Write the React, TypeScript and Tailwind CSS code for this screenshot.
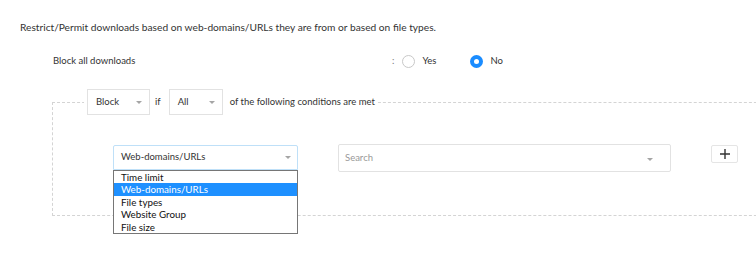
import React from "react";

const Caret = ({ className = "" }: { className?: string }) => (
  <svg width="6" height="3" viewBox="0 0 6 3" className={className}>
    <path d="M0 0h6L3 3z" fill="#a5a5a5" />
  </svg>
);

const options = ["Time limit", "Web-domains/URLs", "File types", "Website Group", "File size"];

export default function App() {
  return (
    <div
      className="relative w-[756px] h-[255px] overflow-hidden bg-white text-[#333] text-[9.5px]"
      style={{ fontFamily: "Lato, 'Liberation Sans', sans-serif" }}
    >
      {/* 설명 */}
      <p className="pt-[20px] pl-[20px] leading-[14px] text-[10.2px]">
        Restrict/Permit downloads based on web-domains/URLs they are from or based on file types.
      </p>

      {/* 전체 차단 */}
      <div className="flex items-center mt-[19px] pl-[53px] h-[16px]">
        <span className="w-[339px]">Block all downloads</span>
        <span className="text-[#777] mr-[8px]">:</span>
        <span className="w-[13px] h-[13px] rounded-full border border-[#c8c8c8] bg-white" />
        <span className="ml-[7px] w-[48px]">Yes</span>
        <span className="w-[13px] h-[13px] rounded-full bg-[#1a8cff] flex items-center justify-center">
          <span className="w-[5px] h-[5px] rounded-full bg-white" />
        </span>
        <span className="ml-[7px]">No</span>
      </div>

      {/* 조건 영역 */}
      <fieldset className="ml-[52px] mt-[20px] w-[740px] border border-dashed border-[#d4d4d4]">
        <legend className="ml-[31px] px-[3px]">
          <div className="flex items-center">
            <div className="w-[63px] h-[26px] border border-[#e2e2e2] flex items-center justify-between pl-[8px] pr-[7px]">
              <span>Block</span>
              <Caret />
            </div>
            <span className="ml-[5px] mr-[8px]">if</span>
            <div className="w-[54px] h-[26px] border border-[#e2e2e2] flex items-center justify-between pl-[8px] pr-[7px]">
              <span>All</span>
              <Caret />
            </div>
            <span className="ml-[7px]">of the following conditions are met</span>
          </div>
        </legend>

        <div className="flex items-start pl-[60px] pt-[30px] pb-[43px]">
          <div className="relative">
            <div className="w-[185px] h-[25px] border border-[#bfe0f8] rounded-t-[2px] flex items-center justify-between pl-[7px] pr-[6px]">
              <span>Web-domains/URLs</span>
              <Caret />
            </div>
            {/* 드롭다운 목록 */}
            <div className="absolute left-0 top-[25px] w-[185px] border border-[#767676] bg-white text-[#111] text-[9.8px] leading-[12.4px] z-10">
              {options.map((o) => (
                <div
                  key={o}
                  className={
                    o === "Web-domains/URLs"
                      ? "bg-[#1e90ff] text-white pl-[7px]"
                      : "pl-[7px]"
                  }
                >
                  {o}
                </div>
              ))}
            </div>
          </div>

          <div className="ml-[40px] -mt-[1px] w-[333px] h-[28px] border border-[#e2e2e2] rounded-[2px] flex items-center justify-between pl-[6px] pr-[17px]">
            <span className="text-[#999]">Search</span>
            <Caret className="mt-[3px]" />
          </div>

          <button className="ml-[40px] w-[27px] h-[18px] border border-[#e5e5e5] rounded-[2px] flex items-center justify-center">
            <svg width="10" height="10" viewBox="0 0 10 10">
              <path d="M5 0v10M0 5h10" stroke="#333" strokeWidth="1.4" />
            </svg>
          </button>
        </div>
      </fieldset>
    </div>
  );
}
